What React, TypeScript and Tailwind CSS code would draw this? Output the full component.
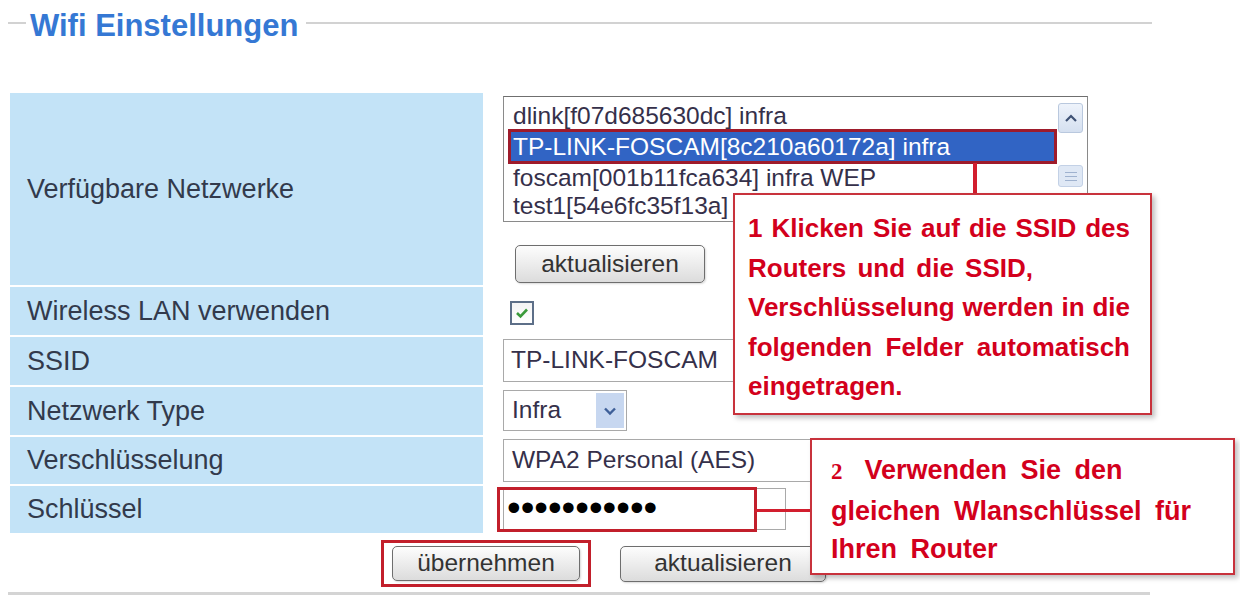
import React from 'react';

const labelCls =
  "w-[473px] shrink-0 bg-[#c3e3f7] flex items-center pl-[17px] text-[27px] text-[#323a4c]";
const fieldText = "text-[24.5px] text-[#35304a]";
const btnCls =
  "rounded-[5px] border border-[#6e6e6e] bg-linear-to-b from-[#fdfdfd] to-[#dcdcdc] text-[24.5px] text-[#333] flex items-center justify-center shadow-[1px_1px_2px_rgba(0,0,0,0.15)]";

const networks = [
  { name: 'dlink[f07d685630dc] infra', active: false, h: 'h-[26px] leading-[26px]' },
  { name: 'TP-LINK-FOSCAM[8c210a60172a] infra', active: true, h: '' },
  { name: 'foscam[001b11fca634] infra WEP', active: false, h: 'h-[28px] leading-[28px]' },
  { name: 'test1[54e6fc35f13a] infra', active: false, h: 'h-[28px] leading-[28px]' },
];

// one row of the settings table: blue label cell + white value cell
const Row = ({ label, h, children }: { label: string; h: string; children?: React.ReactNode }) => (
  <div className={`flex ${h}`}>
    <div className={labelCls}>{label}</div>
    <div className="relative ml-[20px] flex-1">{children}</div>
  </div>
);

const App = () => {
  return (
    <div className="relative w-[1240px] h-[598px] overflow-hidden bg-white font-['Liberation_Sans',Arial,sans-serif]">
      {/* legend */}
      <div className="flex items-start h-[46px]">
        <div className="mt-[22px] ml-[8px] w-[18px] h-[2px] bg-[#d2d2d2]" />
        <div className="mt-[5px] ml-[4px] text-[31px] leading-[41px] font-bold text-[#3578d4]">Wifi Einstellungen</div>
        <div className="mt-[22px] ml-[8px] w-[846px] h-[2px] bg-[#d2d2d2]" />
      </div>

      <div className="mt-[47px] ml-[10px] flex flex-col gap-[2px]">
        <Row label="Verfügbare Netzwerke" h="h-[192px]">
          <div className="pt-[3px]">
            {/* network listbox */}
            <div className="flex w-[585px] h-[126px] border border-[#8a8a8a] border-t-[#6f6f6f] bg-white overflow-hidden">
              <div className={`flex-1 pt-[6px] ${fieldText}`}>
                {networks.map((n) =>
                  n.active ? (
                    <div
                      key={n.name}
                      className="ml-[4px] h-[35px] border-[3px] border-[#9e1b2b] bg-[#3164c4] text-white pl-[2px] leading-[29px] whitespace-nowrap"
                    >
                      {n.name}
                    </div>
                  ) : (
                    <div key={n.name} className={`${n.h} pl-[9px] whitespace-nowrap`}>
                      {n.name}
                    </div>
                  )
                )}
              </div>
              <div className="w-[30px] pt-[6px] pl-[1px] flex flex-col">
                <div className="w-[25px] h-[30px] rounded-[3px] border border-[#b9c8de] bg-linear-to-b from-[#eef3fb] to-[#d5e0f0] flex items-center justify-center">
                  <svg width="14" height="10" viewBox="0 0 14 10">
                    <path d="M2 8 L7 3 L12 8" fill="none" stroke="#3f5275" strokeWidth="2.2" />
                  </svg>
                </div>
                <div className="mt-[32px] w-[25px] h-[22px] rounded-[3px] border border-[#c3d1e6] bg-[#dfe8f5] flex flex-col items-center justify-center gap-[3px]">
                  <div className="w-[12px] h-[1px] bg-[#9fb2cf]" />
                  <div className="w-[12px] h-[1px] bg-[#9fb2cf]" />
                  <div className="w-[12px] h-[1px] bg-[#9fb2cf]" />
                </div>
              </div>
            </div>
            <button className={`${btnCls} mt-[23px] ml-[12px] w-[190px] h-[38px]`}>aktualisieren</button>
          </div>
        </Row>

        <Row label="Wireless LAN verwenden" h="h-[48px]">
          <div className="pt-[14px] pl-[7px]">
            <div className="w-[24px] h-[24px] border-2 border-[#5d6f88] bg-linear-to-b from-[#f4f4f4] to-white flex items-center justify-center">
              <svg width="14" height="12" viewBox="0 0 14 12">
                <path d="M2 6 L5.5 9.5 L12 2.5" fill="none" stroke="#3a9a3a" strokeWidth="2.6" />
              </svg>
            </div>
          </div>
        </Row>

        <Row label="SSID" h="h-[48px]">
          <div className={`mt-[2px] w-[260px] h-[43px] border border-[#a9a9a9] flex items-center pl-[7px] ${fieldText}`}>
            TP-LINK-FOSCAM
          </div>
        </Row>

        <Row label="Netzwerk Type" h="h-[48px]">
          <div className={`mt-[3px] w-[124px] h-[41px] border border-[#a9a9a9] flex items-center pl-[8px] pr-[2px] ${fieldText}`}>
            <span className="flex-1">Infra</span>
            <div className="w-[28px] h-[35px] bg-[#c7d7f0] flex items-center justify-center">
              <svg width="14" height="10" viewBox="0 0 14 10">
                <path d="M2 2.5 L7 7.5 L12 2.5" fill="none" stroke="#3e5f98" strokeWidth="2.4" />
              </svg>
            </div>
          </div>
        </Row>

        <Row label="Verschlüsselung" h="h-[47px]">
          <div className={`mt-[2px] w-[330px] h-[43px] border border-[#a9a9a9] flex items-center pl-[8px] ${fieldText}`}>
            WPA2 Personal (AES)
          </div>
        </Row>

        <Row label="Schlüssel" h="h-[47px]">
          <div className="mt-[2px] w-[283px] h-[42px] border border-[#a9a9a9] flex items-center pl-[3px]">
            <span className="text-[39px] leading-none text-black -mt-[4px]">•••••••••••</span>
          </div>
          <div className="absolute left-[-6px] top-[1px] w-[260px] h-[45px] border-[3px] border-[#c21f2b]" />
        </Row>
      </div>

      {/* submit buttons */}
      <div className="mt-[7px] ml-[381px] flex items-center">
        <div className="w-[210px] h-[47px] border-[3px] border-[#c21f2b] flex items-center justify-center">
          <button className={`${btnCls} w-[188px] h-[35px]`}>übernehmen</button>
        </div>
        <button className={`${btnCls} ml-[29px] w-[206px] h-[36px]`}>aktualisieren</button>
      </div>
      <div className="mt-[5px] ml-[8px] w-[1142px] h-[3px] bg-[#d4d4d4]" />

      {/* connectors */}
      <div className="absolute left-[973px] top-[163px] w-[4px] h-[31px] bg-[#d21e2e]" />
      <div className="absolute left-[755px] top-[509px] w-[56px] h-[3px] bg-[#d21e2e]" />

      {/* callout 1 */}
      <div className="absolute left-[733px] top-[193px] w-[419px] h-[222px] border-2 border-[#c8323c] bg-white shadow-[3px_3px_5px_rgba(0,0,0,0.25)] pt-[14px] pl-[13px] pr-[20px] text-[26px] leading-[39.5px] font-bold text-[#d3001c]">
        <div className="text-justify [text-align-last:justify]">1 Klicken Sie auf die SSID des</div>
        <div className="[word-spacing:4px]">Routers und die SSID,</div>
        <div className="text-justify [text-align-last:justify]">Verschlüsselung werden in die</div>
        <div className="text-justify [text-align-last:justify]">folgenden Felder automatisch</div>
        <div>eingetragen.</div>
      </div>

      {/* callout 2 */}
      <div className="absolute left-[810px] top-[438px] w-[425px] h-[137px] border-2 border-[#c8323c] bg-white shadow-[3px_3px_5px_rgba(0,0,0,0.25)] pt-[11px] pl-[19px] text-[27px] leading-[38.5px] font-bold text-[#d3001c] [word-spacing:6px]">
        <div>
          <span className="font-['Liberation_Serif',serif] text-[23px]">2</span>
          <span className="ml-[22px]">Verwenden Sie den</span>
        </div>
        <div>gleichen Wlanschlüssel für</div>
        <div>Ihren Router</div>
      </div>
    </div>
  );
};

export default App;
